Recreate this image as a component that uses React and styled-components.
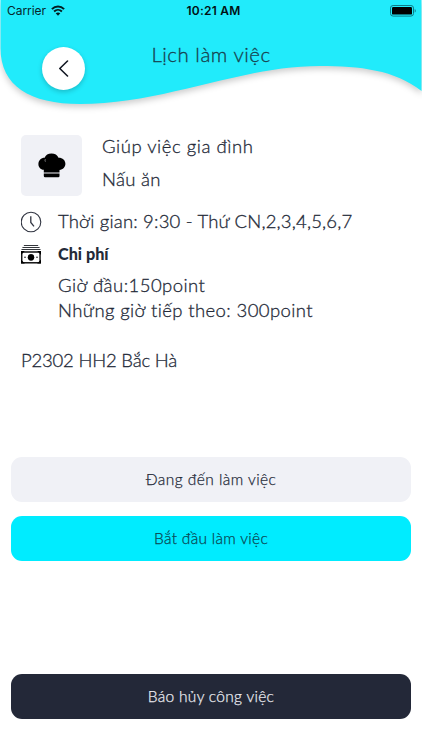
import React from "react";
import styled, { createGlobalStyle } from "styled-components";

const GlobalStyle = createGlobalStyle`
  * {
    box-sizing: border-box;
  }

  body {
    margin: 0;
    background: #fff;
    color: #242a38;
    font-family: Lato, "Noto Sans", sans-serif;
    font-weight: 300;
    font-variant-ligatures: none;
  }
`;

const Screen = styled.div`
  width: 422px;
  height: 750px;
  display: flex;
  flex-direction: column;
  overflow: hidden;
`;

const Header = styled.header`
  position: relative;
  height: 135px;
  flex-shrink: 0;
`;

const Wave = styled.svg`
  position: absolute;
  top: 0;
  left: 0;
  z-index: -1;
  filter: drop-shadow(0 3px 3px rgba(0, 0, 0, 0.2));
`;

const StatusBar = styled.div`
  display: grid;
  grid-template-columns: 1fr auto 1fr;
  align-items: center;
  height: 21px;
  padding: 0 5px 0 7px;
  color: #06262b;
  font-family: Inter, sans-serif;
  font-size: 12px;
  font-weight: 400;
`;

const Carrier = styled.span`
  display: flex;
  align-items: center;
  gap: 5px;
  letter-spacing: -0.05px;
`;

const Clock = styled.span`
  padding-left: 3px;
  color: #021114;
  font-weight: 600;
  letter-spacing: 0.25px;
`;

const Battery = styled.svg`
  justify-self: end;
`;

const TitleBar = styled.div`
  display: grid;
  grid-template-columns: 85px 1fr 85px;
  padding-top: 20px;
`;

const BackButton = styled.button`
  display: flex;
  align-items: center;
  justify-content: center;
  width: 43px;
  height: 43px;
  margin: 6px 0 0 42px;
  padding: 0;
  border: 0;
  border-radius: 50%;
  background: #fff;
  box-shadow: 0 2px 5px rgba(0, 0, 0, 0.2);
`;

const Title = styled.h1`
  margin: 0;
  color: #17414d;
  font-size: 20.5px;
  font-weight: 300;
  line-height: 26px;
  letter-spacing: ${(props) => props.$spacing || 0}px;
  text-align: center;
  -webkit-text-stroke: 0.3px currentColor;
`;

const Service = styled.section`
  display: flex;
  gap: 20px;
  padding-left: 21px;
`;

const ServiceIcon = styled.div`
  display: flex;
  align-items: center;
  justify-content: center;
  width: 61px;
  height: 61px;
  border-radius: 5px;
  background: #f0f1f6;
`;

const ServiceText = styled.div`
  display: flex;
  flex-direction: column;
  gap: 9px;
  margin-top: -1px;
`;

const Text = styled.p`
  margin: 0;
  font-size: 18.5px;
  line-height: 24px;
  letter-spacing: ${(props) => props.$spacing || 0}px;
  white-space: nowrap;
  -webkit-text-stroke: 0.3px currentColor;
`;

const Details = styled.section`
  display: grid;
  grid-template-columns: 22px 1fr;
  column-gap: 15px;
  padding: 14px 0 0 21px;
`;

const TimeText = styled(Text)`
  line-height: 22px;
`;

const IconCell = styled.div`
  display: flex;
  align-items: center;
  height: ${(props) => props.$height}px;
`;

const CostTitle = styled.h2`
  margin: 0;
  font-size: 16.2px;
  font-weight: 900;
  line-height: 40px;
`;

const CostList = styled.div`
  grid-column: 2;
  margin-top: -1px;
`;

const CostLine = styled(Text)`
  line-height: 25px;
`;

const Address = styled(Text)`
  padding: 25px 0 0 21px;
`;

const Actions = styled.div`
  display: flex;
  flex-direction: column;
  flex: 1;
  gap: 14px;
  margin-top: 85px;
  padding: 0 11px 31px 11px;
`;

const variants = {
  light: { background: "#f0f1f6", color: "#242a38" },
  primary: { background: "#00ecff", color: "#0b4551" },
  dark: { background: "#232838", color: "#e9eaf0" },
};

const Button = styled.button`
  height: 45px;
  padding: 0 0 2px;
  border: 0;
  border-radius: 11px;
  background: ${(props) => variants[props.$variant].background};
  color: ${(props) => variants[props.$variant].color};
  font-family: inherit;
  font-size: 15.5px;
  font-weight: inherit;
  letter-spacing: ${(props) => props.$spacing || 0}px;
  -webkit-text-stroke: 0.25px currentColor;

  &:last-child {
    margin-top: auto;
  }
`;

const WifiIcon = () => (
  <svg width="14" height="11" viewBox="0 0 14 11" fill="none" stroke="#031d21">
    <path d="M0.9 4.1C4.4 0.5 9.6 0.5 13.1 4.1" strokeWidth="2" />
    <path d="M3.1 6.5C5.3 4.3 8.7 4.3 10.9 6.5" strokeWidth="1.9" />
    <path d="M7 10.7L4.7 8.3C6 7.1 8 7.1 9.3 8.3Z" fill="#031d21" stroke="none" />
  </svg>
);

const BatteryIcon = () => (
  <Battery width="27" height="12" viewBox="0 0 27 12">
    <rect x="0.5" y="0.5" width="23" height="10.6" rx="2.6" fill="none" stroke="#0d7b87" />
    <rect x="2" y="2" width="20" height="7.6" rx="1.2" fill="#000" />
    <path d="M24.7 4c1.4.5 1.4 3.1 0 3.6z" fill="#0d7b87" />
  </Battery>
);

const ChefHatIcon = () => (
  <svg width="28" height="25" viewBox="0 0 28 25">
    <path d="M5.8 16.8C2.4 16.4 0.4 14 0.4 10.9C0.4 7.3 3.2 4.7 6.6 4.7C7.6 2.2 10.2 0.6 13.5 0.6C16.8 0.6 19.5 2.2 20.5 4.7C24.5 4.6 27.4 7.2 27.4 10.8C27.4 14.2 25 16.7 21.5 16.9V19.4H5.8Z" />
    <path d="M7.3 6.2C6.9 7.2 7 8 7.4 8.7" fill="none" stroke="#f0f1f6" strokeWidth="0.5" />
    <path d="M5.8 20.5H21.5V23Q21.5 24.2 20.3 24.2H7Q5.8 24.2 5.8 23Z" />
  </svg>
);

const ClockIcon = () => (
  <svg width="22" height="22" viewBox="0 0 22 22" fill="none" stroke="#303441" strokeWidth="1.1">
    <circle cx="10" cy="11" r="9.8" />
    <path d="M9.8 5.2V11.5L13 15.3" strokeWidth="1.3" />
  </svg>
);

const MoneyIcon = () => (
  <svg width="20" height="20" viewBox="0 0 21 20" preserveAspectRatio="none">
    <path d="M3 1.500H18M1.5 3.500H19.500M0.500 5.500H20.500" stroke="#171a20" strokeWidth="0.9" />
    <rect x="0.8" y="8" width="19.2" height="10.8" fill="#fff" stroke="#000" strokeWidth="1.4" />
    <path d="M0 7H4L0 11ZM21 7V11L17 7ZM0 19.5V15.5L4 19.5ZM21 19.5H17L21 15.5Z" />
    <circle cx="10.5" cy="13.3" r="3.4" />
    <circle cx="4.2" cy="13.3" r="0.8" />
    <circle cx="16.8" cy="13.3" r="0.8" />
  </svg>
);

const App = () => {
  return (
    <>
      <GlobalStyle />
      <Screen>
        <Header>
          <Wave width="422" height="125" viewBox="0 0 422 125">
            <path
              d="M0.5 0H421.5V91C395 70 360 66 320 66C240 66 165 104 80 104C30 104 0.5 86 0.5 48Z"
              fill="#21ebfb"
            />
          </Wave>
          <StatusBar>
            <Carrier>
              Carrier
              <WifiIcon />
            </Carrier>
            <Clock>10:21 AM</Clock>
            <BatteryIcon />
          </StatusBar>
          <TitleBar>
            <BackButton aria-label="Quay lại">
              <svg width="11" height="17" viewBox="0 0 11 17" fill="none" stroke="#111722" strokeWidth="1.6">
                <path d="M9.5 1L1.8 8.5L9.5 16" strokeLinecap="round" strokeLinejoin="round" />
              </svg>
            </BackButton>
            <Title $spacing={0.5}>Lịch làm việc</Title>
          </TitleBar>
        </Header>
        <Service>
          <ServiceIcon>
            <ChefHatIcon />
          </ServiceIcon>
          <ServiceText>
            <Text $spacing={0.55}>Giúp việc gia đình</Text>
            <Text $spacing={0.3}>Nấu ăn</Text>
          </ServiceText>
        </Service>
        <Details>
          <IconCell $height={24}>
            <ClockIcon />
          </IconCell>
          <TimeText $spacing={0.19}>Thời gian: 9:30 - Thứ CN,2,3,4,5,6,7</TimeText>
          <IconCell $height={40}>
            <MoneyIcon />
          </IconCell>
          <CostTitle>Chi phí</CostTitle>
          <CostList>
            <CostLine $spacing={0.45}>Giờ đầu:150point</CostLine>
            <CostLine $spacing={0.4}>Những giờ tiếp theo: 300point</CostLine>
          </CostList>
        </Details>
        <Address $spacing={-0.2}>P2302 HH2 Bắc Hà</Address>
        <Actions>
          <Button $variant="light" $spacing={0.45}>Đang đến làm việc</Button>
          <Button $variant="primary" $spacing={0.3}>Bắt đầu làm việc</Button>
          <Button $variant="dark" $spacing={0.3}>Báo hủy công việc</Button>
        </Actions>
      </Screen>
    </>
  );
};

export default App;
